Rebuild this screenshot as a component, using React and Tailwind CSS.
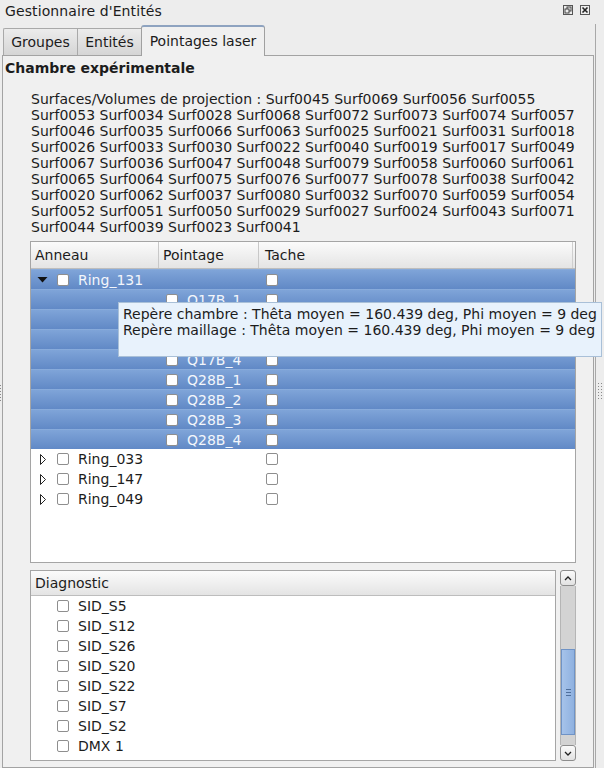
import React from "react";

const surfLines = [
  "Surfaces/Volumes de projection : Surf0045 Surf0069 Surf0056 Surf0055",
  "Surf0053 Surf0034 Surf0028 Surf0068 Surf0072 Surf0073 Surf0074 Surf0057",
  "Surf0046 Surf0035 Surf0066 Surf0063 Surf0025 Surf0021 Surf0031 Surf0018",
  "Surf0026 Surf0033 Surf0030 Surf0022 Surf0040 Surf0019 Surf0017 Surf0049",
  "Surf0067 Surf0036 Surf0047 Surf0048 Surf0079 Surf0058 Surf0060 Surf0061",
  "Surf0065 Surf0064 Surf0075 Surf0076 Surf0077 Surf0078 Surf0038 Surf0042",
  "Surf0020 Surf0062 Surf0037 Surf0080 Surf0032 Surf0070 Surf0059 Surf0054",
  "Surf0052 Surf0051 Surf0050 Surf0029 Surf0027 Surf0024 Surf0043 Surf0071",
  "Surf0044 Surf0039 Surf0023 Surf0041",
];

const children = ["Q17B_1", "Q17B_2", "Q17B_3", "Q17B_4", "Q28B_1", "Q28B_2", "Q28B_3", "Q28B_4"];
const closedRings = ["Ring_033", "Ring_147", "Ring_049"];
const diagnostics = ["SID_S5", "SID_S12", "SID_S26", "SID_S20", "SID_S22", "SID_S7", "SID_S2", "DMX 1", ""];

// small Qt style checkbox
function Check() {
  return <span className="block w-[12px] h-[12px] shrink-0 bg-white border border-[#8e8e8e] rounded-[2px]" />;
}

function ArrowDown() {
  return (
    <svg width="11" height="11" viewBox="0 0 11 11" className="shrink-0">
      <polygon points="0.5,3 10.5,3 5.5,8.5" fill="#111" />
    </svg>
  );
}

function ArrowRight() {
  return (
    <svg width="11" height="11" viewBox="0 0 11 11" className="shrink-0">
      <polygon points="3.5,0.5 8.5,5.5 3.5,10.5" fill="#fff" stroke="#222" strokeWidth="1" />
    </svg>
  );
}

// splitter grip dots
function Grip() {
  return (
    <div className="flex flex-col gap-[2px]">
      {[0, 1, 2, 3, 4, 5].map((i) => (
        <span key={i} className="block w-[1px] h-[1px] bg-[#8a8a8a]" />
      ))}
    </div>
  );
}

function SelRow({ children: c }) {
  return (
    <div className="flex h-[20px] items-center bg-gradient-to-b from-[#7fa4d8] to-[#6189c6] border-t border-[#88abdb] text-[#f3f6fb]">
      {c}
    </div>
  );
}

export default function App() {
  return (
    <div className="w-[604px] h-[768px] overflow-hidden relative bg-[#ededed] text-[#1c1c1c] text-[14px] leading-[16px] font-['DejaVu_Sans',sans-serif]">
      {/* Title bar */}
      <div className="h-[24px] flex items-center pl-[5px] pr-[14px]">
        <span className="flex-1 pb-[3px] tracking-[0.1px]">Gestionnaire d'Entités</span>
        <div className="flex gap-[7px] items-center pb-[4px]">
          <svg width="10" height="10" viewBox="0 0 10 10">
            <rect x="0.5" y="0.5" width="9" height="9" fill="none" stroke="#555" />
            <rect x="4" y="2" width="4" height="4" fill="none" stroke="#444" />
            <rect x="2" y="4" width="4" height="4" fill="#eee" stroke="#444" />
          </svg>
          <svg width="10" height="10" viewBox="0 0 10 10">
            <rect x="0.5" y="0.5" width="9" height="9" fill="none" stroke="#555" />
            <path d="M2.5 2.5 L7.5 7.5 M7.5 2.5 L2.5 7.5" stroke="#222" strokeWidth="1.6" />
          </svg>
        </div>
      </div>

      <div className="flex h-[744px]">
        {/* left gutter */}
        <div className="w-[2px] flex flex-col items-start pt-[361px]">
          <Grip />
        </div>

        {/* Tab widget */}
        <div className="w-[592px] flex flex-col">
          <div className="h-[31px] flex items-end pl-[1px]">
            <div className="w-[74px] h-[27px] flex items-center justify-center border-l border-t border-[#a9a9a9] bg-gradient-to-b from-[#ececec] to-[#d5d5d5] rounded-tl-[2px]">
              Groupes
            </div>
            <div className="w-[64px] h-[27px] flex items-center justify-center border-l border-t border-[#a9a9a9] bg-gradient-to-b from-[#ececec] to-[#d5d5d5]">
              Entités
            </div>
            <div className="w-[124px] h-[31px] -mb-[1px] relative z-10 flex items-center justify-center border-l border-r border-t-2 border-[#a0a0a0] border-t-[#8ea3c0] rounded-t-[3px] bg-[#f0f0f0] pb-[2px]">
              Pointages laser
            </div>
          </div>

          {/* Pane */}
          <div className="flex-1 border border-[#a3a3a3] bg-[#f0f0f0]">
            <div className="pt-[4px] pl-[2px] h-[20px] font-bold">Chambre expérimentale</div>

            <div className="mt-[15px] pl-[28px]">
              {surfLines.map((l, i) => (
                <div key={i} className="h-[16px] whitespace-nowrap">{l}</div>
              ))}
            </div>

            {/* Tree */}
            <div className="mt-[6px] ml-[27px] w-[546px] h-[322px] border border-[#a5a5a5] bg-white overflow-hidden">
              <div className="flex h-[27px] items-center border-b border-[#bdbdbd] bg-gradient-to-b from-[#fbfbfb] to-[#e4e4e4]">
                <div className="w-[128px] h-full flex items-center pl-[4px] border-r border-[#c8c8c8]">Anneau</div>
                <div className="w-[100px] h-full flex items-center pl-[4px] border-r border-[#c8c8c8]">Pointage</div>
                <div className="flex-1 h-full flex items-center pl-[6px] mr-[2px] border-r border-[#cfcfcf]">Tache</div>
              </div>

              <SelRow>
                <div className="w-[128px] flex items-center pl-[6px]">
                  <ArrowDown />
                  <span className="ml-[9px]"><Check /></span>
                  <span className="ml-[9px]">Ring_131</span>
                </div>
                <div className="w-[100px]" />
                <div className="pl-[7px]"><Check /></div>
              </SelRow>
              {children.map((c) => (
                <SelRow key={c}>
                  <div className="w-[128px]" />
                  <div className="w-[100px] flex items-center pl-[7px]">
                    <Check />
                    <span className="ml-[9px]">{c}</span>
                  </div>
                  <div className="pl-[7px]"><Check /></div>
                </SelRow>
              ))}
              {closedRings.map((r) => (
                <div key={r} className="flex h-[20px] items-center">
                  <div className="w-[128px] flex items-center pl-[6px]">
                    <ArrowRight />
                    <span className="ml-[9px]"><Check /></span>
                    <span className="ml-[9px]">{r}</span>
                  </div>
                  <div className="w-[100px]" />
                  <div className="pl-[7px]"><Check /></div>
                </div>
              ))}
            </div>

            {/* Diagnostic list + scrollbar */}
            <div className="mt-[7px] ml-[27px] flex gap-[4px]">
              <div className="w-[526px] h-[191px] border border-[#a5a5a5] bg-white overflow-hidden">
                <div className="h-[25px] flex items-center pl-[4px] border-b border-[#bdbdbd] bg-gradient-to-b from-[#fbfbfb] to-[#e4e4e4]">
                  Diagnostic
                </div>
                {diagnostics.map((d, i) => (
                  <div key={i} className="h-[20px] flex items-center pl-[26px]">
                    <Check />
                    <span className="ml-[9px]">{d}</span>
                  </div>
                ))}
              </div>

              <div className="w-[16px] h-[191px] flex flex-col">
                <div className="h-[16px] flex items-center justify-center border border-[#8d8d8d] rounded-[3px] bg-gradient-to-b from-[#fafafa] to-[#e2e2e2]">
                  <svg width="8" height="5" viewBox="0 0 8 5"><path d="M1 4 L4 1 L7 4" fill="none" stroke="#222" strokeWidth="1.3" /></svg>
                </div>
                <div className="flex-1 flex flex-col bg-[#d3d3d3] border-x border-[#b5b5b5]">
                  <div className="h-[63px]" />
                  <div className="h-[86px] flex items-center justify-center bg-gradient-to-r from-[#a6c3ea] to-[#8fb1e0] border border-[#6f93c6]">
                    <div className="flex flex-col gap-[2px]">
                      <span className="block w-[5px] h-[1px] bg-[#4f6f9c]" />
                      <span className="block w-[5px] h-[1px] bg-[#4f6f9c]" />
                      <span className="block w-[5px] h-[1px] bg-[#4f6f9c]" />
                    </div>
                  </div>
                </div>
                <div className="h-[16px] flex items-center justify-center border border-[#8d8d8d] rounded-[3px] bg-gradient-to-b from-[#fafafa] to-[#e2e2e2]">
                  <svg width="8" height="5" viewBox="0 0 8 5"><path d="M1 1 L4 4 L7 1" fill="none" stroke="#222" strokeWidth="1.3" /></svg>
                </div>
              </div>
            </div>
          </div>
        </div>

        {/* right gutter */}
        <div className="w-[10px] flex">
          <div className="w-[1px] ml-[1px] h-full bg-[#a8a8a8]" />
          <div className="pl-[2px] pt-[359px] flex gap-[2px]">
            <Grip />
            <Grip />
          </div>
        </div>
      </div>

      {/* Tooltip */}
      <div className="absolute left-[118px] top-[302px] w-[484px] h-[55px] bg-[#e8f2fc] border border-[#a9c0d8] pl-[4px] pt-[3px] whitespace-nowrap">
        <div className="h-[16px]">Repère chambre : Thêta moyen = 160.439 deg, Phi moyen = 9 deg</div>
        <div className="h-[16px]">Repère maillage : Thêta moyen = 160.439 deg, Phi moyen = 9 deg</div>
      </div>
    </div>
  );
}
